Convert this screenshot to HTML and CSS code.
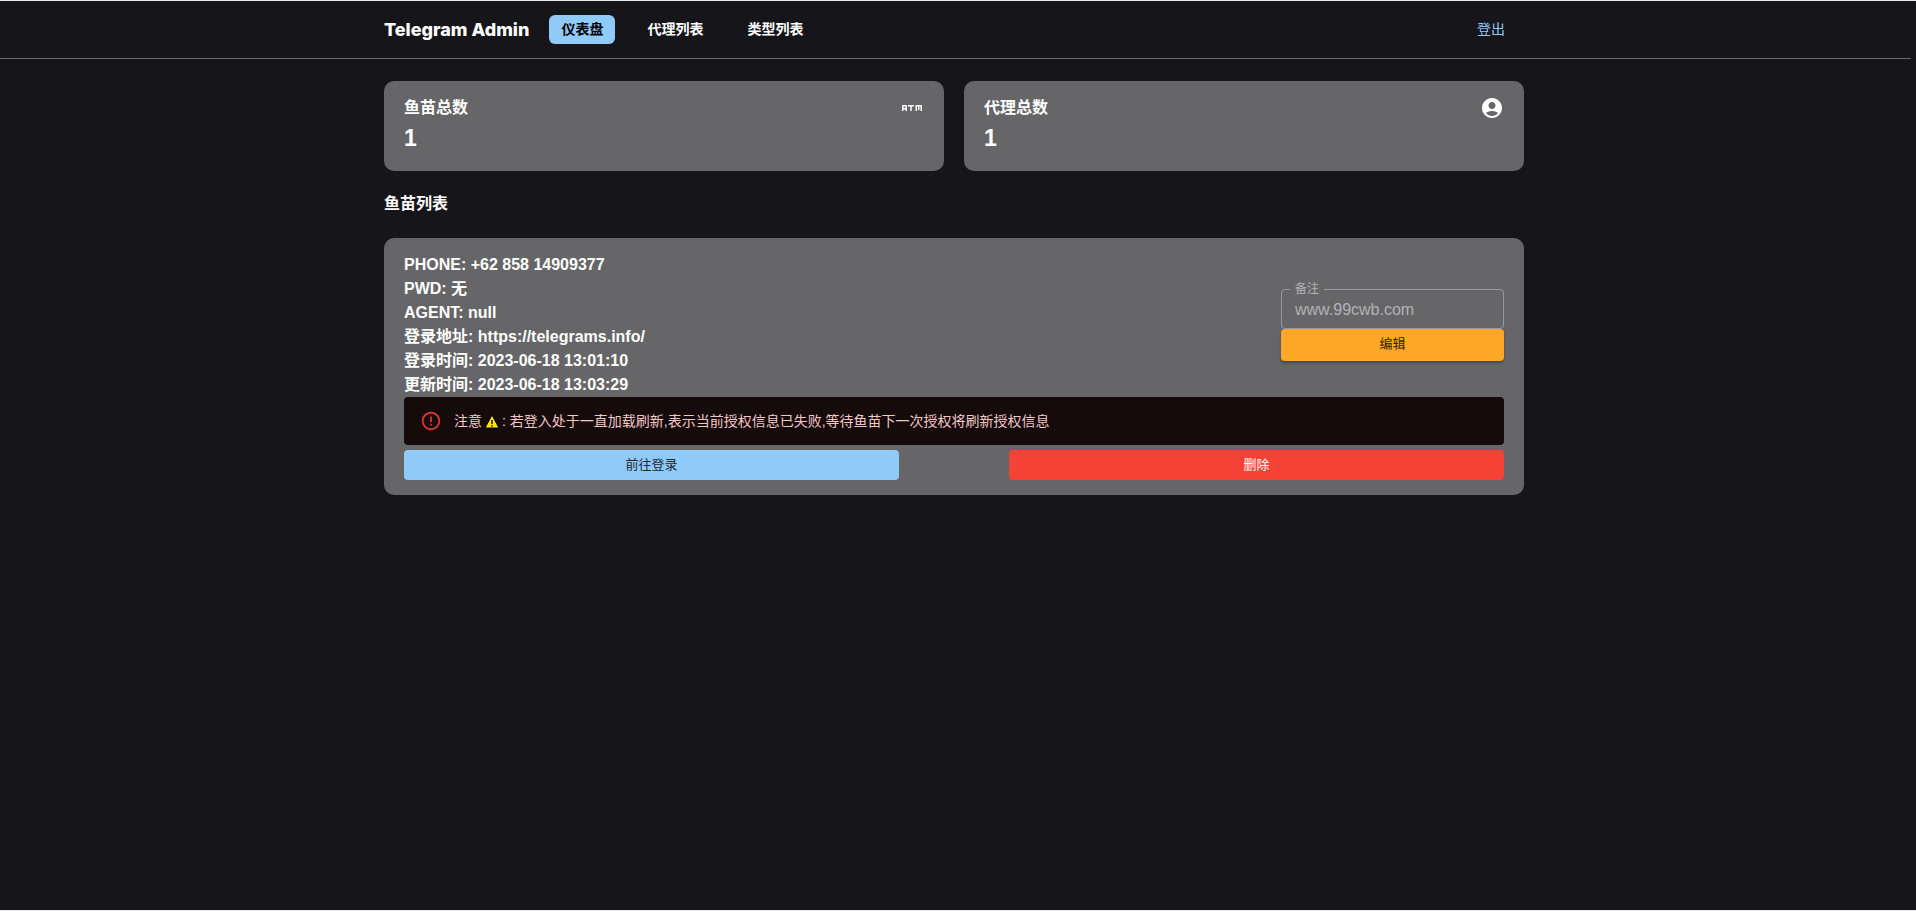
FILE: index.html
```html
<!DOCTYPE html>
<html lang="zh-CN">
<head>
<meta charset="utf-8">
<meta name="viewport" content="width=device-width, initial-scale=1">
<title>Telegram Admin</title>
<link rel="stylesheet" href="styles.css">
</head>
<body>
<header class="header">
  <div class="container header-row">
    <span class="brand">Telegram Admin</span>
    <nav class="nav">
      <a class="nav-link nav-link-active" href="#">仪表盘</a>
      <a class="nav-link" href="#">代理列表</a>
      <a class="nav-link" href="#">类型列表</a>
    </nav>
    <button class="logout" type="button">登出</button>
  </div>
</header>
<main class="main">
  <div class="container">
    <section class="stats">
      <div class="card stat">
        <div>
          <div class="stat-title">鱼苗总数</div>
          <div class="stat-value">1</div>
        </div>
        <svg class="stat-icon" viewBox="0 0 24 24" aria-hidden="true"><path d="M8 9v1.500h2.250V15h1.500v-4.500H14V9H8zM6 9H3c-.55 0-1 .45-1 1v5h1.500v-1.500h2V15H7v-5c0-.55-.45-1-1-1zm-.5 3h-2v-1.500h2V12zM21 9h-4.500c-.55 0-1 .45-1 1v5H17v-4.500h1V14h1.500v-3.510h1V15H22v-5c0-.55-.45-1-1-1z"/></svg>
      </div>
      <div class="card stat">
        <div>
          <div class="stat-title">代理总数</div>
          <div class="stat-value">1</div>
        </div>
        <svg class="stat-icon" viewBox="0 0 24 24" aria-hidden="true"><path d="M12 2C6.480 2 2 6.480 2 12s4.480 10 10 10 10-4.480 10-10S17.520 2 12 2zm0 4c1.930 0 3.500 1.570 3.500 3.500S13.930 13 12 13s-3.500-1.570-3.500-3.500S10.070 6 12 6zm0 14c-2.030 0-4.430-.82-6.140-2.880C7.550 15.800 9.680 15 12 15s4.450.8 6.140 2.120C16.430 19.180 14.030 20 12 20z"/></svg>
      </div>
    </section>
    <h2 class="section-title">鱼苗列表</h2>
    <article class="card">
      <div class="record">
        <div class="record-info">
          <div>PHONE: +62 858 14909377</div>
          <div>PWD: 无</div>
          <div>AGENT: null</div>
          <div>登录地址: https://telegrams.info/</div>
          <div>登录时间: 2023-06-18 13:01:10</div>
          <div>更新时间: 2023-06-18 13:03:29</div>
        </div>
        <div class="remark">
          <div class="field">
            <label class="field-label" for="remark">备注</label>
            <input class="field-input" id="remark" type="text" value="www.99cwb.com" disabled>
          </div>
          <button class="btn btn-edit" type="button">编辑</button>
        </div>
      </div>
      <div class="alert" role="alert">
        <svg class="alert-icon" viewBox="0 0 24 24" aria-hidden="true"><path d="M11 15h2v2h-2zm0-8h2v6h-2zm.99-5C6.470 2 2 6.480 2 12s4.470 10 9.990 10C17.520 22 22 17.520 22 12S17.520 2 11.990 2zM12 20c-4.420 0-8-3.580-8-8s3.580-8 8-8 8 3.580 8 8-3.580 8-8 8z"/></svg>
        <p class="alert-text">注意<svg class="warn-icon" viewBox="0 0 18 14" aria-hidden="true"><path d="M9 0L16 13H2z" fill="#ffe600" stroke="#000" stroke-width="1"/><path d="M8.300 5h1.400v4h-1.400zM8.300 10h1.400v1.500h-1.400z" fill="#000"/></svg>: 若登入处于一直加载刷新,表示当前授权信息已失败,等待鱼苗下一次授权将刷新授权信息</p>
      </div>
      <div class="actions">
        <button class="btn btn-login" type="button">前往登录</button>
        <button class="btn btn-delete" type="button">删除</button>
      </div>
    </article>
  </div>
</main>
</body>
</html>
```
FILE: styles.css
```css
* {
  box-sizing: border-box;
}

body {
  margin: 0;
  min-height: 100vh;
  padding-right: 5px;
  border-top: 1px solid #e8ebe8;
  border-bottom: 1px solid #e8e8e8;
  background: #16151a;
  color: #fff;
  font-family: "Liberation Sans", "Noto Sans CJK SC", sans-serif;
  font-size: 16px;
  line-height: 24px;
}

button,
input {
  font-family: inherit;
}

.container {
  max-width: 1140px;
  margin: 0 auto;
}

.header {
  padding: 14px 3px 14px 0;
  border-bottom: 1px solid #69696c;
}

.header-row {
  display: flex;
  align-items: center;
  gap: 20px;
}

.brand {
  font-family: Inter, sans-serif;
  font-size: 18px;
  font-weight: 800;
}

.nav {
  display: flex;
  flex: 1;
  gap: 20px;
}

.nav-link {
  padding: 4px 12px;
  border-radius: 6px;
  color: #fff;
  font-size: 14px;
  font-weight: 700;
  line-height: 21px;
  text-decoration: none;
}

.nav-link-active {
  background: #90caf9;
  color: #000;
}

.logout {
  padding: 0 19px 2px;
  border: 0;
  background: none;
  color: #90caf9;
  font-size: 14px;
  line-height: 24px;
}

.main {
  padding: 22px 3px 22px 0;
}

.card {
  padding: 15px 20px;
  border-radius: 10px;
  background: #666668;
}

.stats {
  display: grid;
  grid-template-columns: 1fr 1fr;
  gap: 20px;
}

.stat {
  display: flex;
  justify-content: space-between;
}

.stat-title {
  font-weight: 700;
}

.stat-value {
  font-size: 23px;
  font-weight: 700;
  line-height: 36px;
}

.stat-icon {
  width: 24px;
  height: 24px;
  fill: #fff;
}

.section-title {
  margin: 21px 0 22px;
  font-size: 16px;
  font-weight: 700;
}

.record {
  display: flex;
  align-items: center;
  justify-content: space-between;
}

.record-info {
  font-weight: 700;
}

.remark {
  display: flex;
  flex-direction: column;
}

.field {
  position: relative;
  display: flex;
}

.field-label {
  position: absolute;
  top: -8px;
  left: 9px;
  padding: 0 5px;
  background: #666668;
  color: #b2b2b4;
  font-size: 12px;
  line-height: 16px;
}

.field-input {
  width: 223px;
  height: 40px;
  padding: 1px 13px 0;
  border: 1px solid #98989a;
  border-radius: 4px;
  background: none;
  color: #b2b2b4;
  font-size: 16px;
}

.btn {
  height: 30px;
  padding: 0 10px 4px;
  border: 0;
  border-radius: 4px;
  font-size: 13px;
}

.btn-edit {
  height: 32px;
  padding-bottom: 6px;
  background: #ffa726;
  color: #332108;
  box-shadow: 0 2px 3px rgba(0, 0, 0, 0.3);
}

.alert {
  display: flex;
  align-items: center;
  gap: 12px;
  padding: 12px 16px;
  border-radius: 4px;
  background: #160b0b;
  color: #f4c7c7;
  font-size: 14px;
}

.alert-icon {
  flex: none;
  width: 22px;
  height: 22px;
  fill: #d9362c;
}

.alert-text {
  margin: 0;
}

.warn-icon {
  width: 18px;
  height: 14px;
  margin: 0 1px;
  vertical-align: -3px;
}

.actions {
  display: flex;
  justify-content: space-between;
  margin-top: 5px;
}

.actions .btn {
  width: 45%;
}

.btn-login {
  background: #90caf9;
  color: #1d2832;
}

.btn-delete {
  background: #f44336;
  color: #fff;
}
```
